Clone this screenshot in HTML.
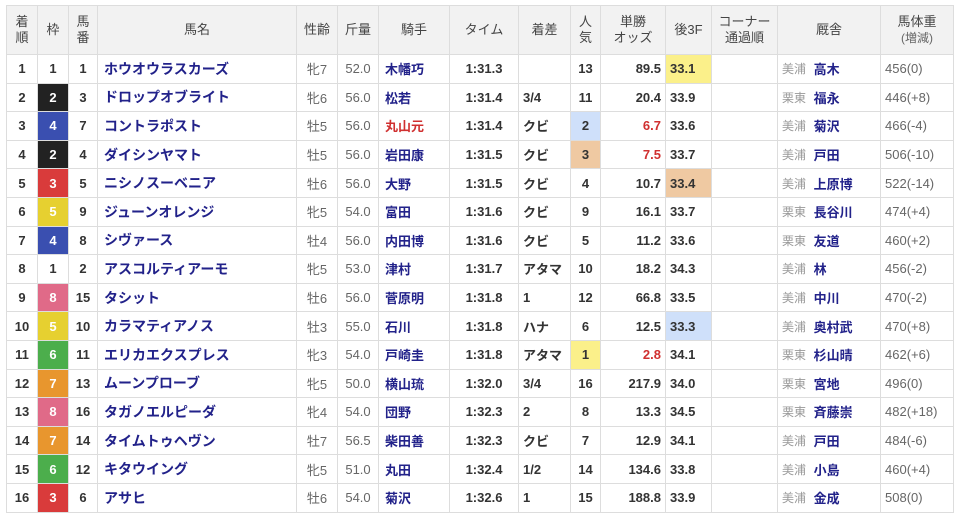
<!DOCTYPE html>
<html><head><meta charset="utf-8"><style>
body{margin:0;background:#fff;font-family:"Liberation Sans","Noto Sans CJK JP",sans-serif;}
table{position:absolute;left:6px;top:5px;border-collapse:collapse;table-layout:fixed;width:947px;font-size:13px;color:#444;}
td,th{border:1px solid #ddd;padding:0 4px;white-space:nowrap;overflow:hidden;vertical-align:middle;}
th{background:#f2f2f2;height:48px;font-weight:normal;font-size:13px;line-height:16px;text-align:center;color:#444;}
td{height:27.6px;}
.c{text-align:center}.r{text-align:right}
.b{font-weight:bold;color:#333}
.nm{font-weight:600;color:#22228a;font-size:14px;padding-left:6px}
.jk{font-weight:bold;color:#22228a;padding-left:6px}
.red{color:#d03030 !important}
.g{color:#666}
.sm{color:#999;font-size:12px;vertical-align:middle}
.st .jk{vertical-align:middle;padding-left:4px}
.w1{background:#fff;color:#333}.w2{background:#222;color:#fff}.w3{background:#d93b3b;color:#fff}.w4{background:#3a4fb0;color:#fff}.w5{background:#e6d030;color:#fff}.w6{background:#4cae4c;color:#fff}.w7{background:#e8962e;color:#fff}.w8{background:#e06a88;color:#fff}
.hy{background:#fbf08a}.hb{background:#cfe0fa}.ht{background:#efc9a2}
.ttl{color:#666;font-size:12px}
</style></head><body>
<table>
<colgroup><col style="width:31px"><col style="width:31px"><col style="width:29px"><col style="width:199px"><col style="width:41px"><col style="width:41px"><col style="width:71px"><col style="width:69px"><col style="width:52px"><col style="width:30px"><col style="width:65px"><col style="width:46px"><col style="width:66px"><col style="width:103px"><col style="width:73px"></colgroup>
<tr><th>着<br>順</th><th>枠</th><th>馬<br>番</th><th>馬名</th><th>性齢</th><th>斤量</th><th>騎手</th><th>タイム</th><th>着差</th><th>人<br>気</th><th>単勝<br>オッズ</th><th>後3F</th><th>コーナー<br>通過順</th><th>厩舎</th><th>馬体重<br><span class="ttl">(増減)</span></th></tr>
<tr><td class="c b">1</td><td class="c b w1">1</td><td class="c b">1</td><td class="nm">ホウオウラスカーズ</td><td class="c g">牝7</td><td class="c g">52.0</td><td class="jk">木幡巧</td><td class="c b">1:31.3</td><td class="b"></td><td class="c b">13</td><td class="r b">89.5</td><td class="b hy">33.1</td><td></td><td class="st"><span class="sm">美浦</span> <span class="jk">高木</span></td><td class="g">456(0)</td></tr>
<tr><td class="c b">2</td><td class="c b w2">2</td><td class="c b">3</td><td class="nm">ドロップオブライト</td><td class="c g">牝6</td><td class="c g">56.0</td><td class="jk">松若</td><td class="c b">1:31.4</td><td class="b">3/4</td><td class="c b">11</td><td class="r b">20.4</td><td class="b">33.9</td><td></td><td class="st"><span class="sm">栗東</span> <span class="jk">福永</span></td><td class="g">446(+8)</td></tr>
<tr><td class="c b">3</td><td class="c b w4">4</td><td class="c b">7</td><td class="nm">コントラポスト</td><td class="c g">牡5</td><td class="c g">56.0</td><td class="jk red">丸山元</td><td class="c b">1:31.4</td><td class="b">クビ</td><td class="c b hb">2</td><td class="r b red">6.7</td><td class="b">33.6</td><td></td><td class="st"><span class="sm">美浦</span> <span class="jk">菊沢</span></td><td class="g">466(-4)</td></tr>
<tr><td class="c b">4</td><td class="c b w2">2</td><td class="c b">4</td><td class="nm">ダイシンヤマト</td><td class="c g">牡5</td><td class="c g">56.0</td><td class="jk">岩田康</td><td class="c b">1:31.5</td><td class="b">クビ</td><td class="c b ht">3</td><td class="r b red">7.5</td><td class="b">33.7</td><td></td><td class="st"><span class="sm">美浦</span> <span class="jk">戸田</span></td><td class="g">506(-10)</td></tr>
<tr><td class="c b">5</td><td class="c b w3">3</td><td class="c b">5</td><td class="nm">ニシノスーベニア</td><td class="c g">牡6</td><td class="c g">56.0</td><td class="jk">大野</td><td class="c b">1:31.5</td><td class="b">クビ</td><td class="c b">4</td><td class="r b">10.7</td><td class="b ht">33.4</td><td></td><td class="st"><span class="sm">美浦</span> <span class="jk">上原博</span></td><td class="g">522(-14)</td></tr>
<tr><td class="c b">6</td><td class="c b w5">5</td><td class="c b">9</td><td class="nm">ジューンオレンジ</td><td class="c g">牝5</td><td class="c g">54.0</td><td class="jk">富田</td><td class="c b">1:31.6</td><td class="b">クビ</td><td class="c b">9</td><td class="r b">16.1</td><td class="b">33.7</td><td></td><td class="st"><span class="sm">栗東</span> <span class="jk">長谷川</span></td><td class="g">474(+4)</td></tr>
<tr><td class="c b">7</td><td class="c b w4">4</td><td class="c b">8</td><td class="nm">シヴァース</td><td class="c g">牡4</td><td class="c g">56.0</td><td class="jk">内田博</td><td class="c b">1:31.6</td><td class="b">クビ</td><td class="c b">5</td><td class="r b">11.2</td><td class="b">33.6</td><td></td><td class="st"><span class="sm">栗東</span> <span class="jk">友道</span></td><td class="g">460(+2)</td></tr>
<tr><td class="c b">8</td><td class="c b w1">1</td><td class="c b">2</td><td class="nm">アスコルティアーモ</td><td class="c g">牝5</td><td class="c g">53.0</td><td class="jk">津村</td><td class="c b">1:31.7</td><td class="b">アタマ</td><td class="c b">10</td><td class="r b">18.2</td><td class="b">34.3</td><td></td><td class="st"><span class="sm">美浦</span> <span class="jk">林</span></td><td class="g">456(-2)</td></tr>
<tr><td class="c b">9</td><td class="c b w8">8</td><td class="c b">15</td><td class="nm">タシット</td><td class="c g">牡6</td><td class="c g">56.0</td><td class="jk">菅原明</td><td class="c b">1:31.8</td><td class="b">1</td><td class="c b">12</td><td class="r b">66.8</td><td class="b">33.5</td><td></td><td class="st"><span class="sm">美浦</span> <span class="jk">中川</span></td><td class="g">470(-2)</td></tr>
<tr><td class="c b">10</td><td class="c b w5">5</td><td class="c b">10</td><td class="nm">カラマティアノス</td><td class="c g">牡3</td><td class="c g">55.0</td><td class="jk">石川</td><td class="c b">1:31.8</td><td class="b">ハナ</td><td class="c b">6</td><td class="r b">12.5</td><td class="b hb">33.3</td><td></td><td class="st"><span class="sm">美浦</span> <span class="jk">奥村武</span></td><td class="g">470(+8)</td></tr>
<tr><td class="c b">11</td><td class="c b w6">6</td><td class="c b">11</td><td class="nm">エリカエクスプレス</td><td class="c g">牝3</td><td class="c g">54.0</td><td class="jk">戸崎圭</td><td class="c b">1:31.8</td><td class="b">アタマ</td><td class="c b hy">1</td><td class="r b red">2.8</td><td class="b">34.1</td><td></td><td class="st"><span class="sm">栗東</span> <span class="jk">杉山晴</span></td><td class="g">462(+6)</td></tr>
<tr><td class="c b">12</td><td class="c b w7">7</td><td class="c b">13</td><td class="nm">ムーンプローブ</td><td class="c g">牝5</td><td class="c g">50.0</td><td class="jk">横山琉</td><td class="c b">1:32.0</td><td class="b">3/4</td><td class="c b">16</td><td class="r b">217.9</td><td class="b">34.0</td><td></td><td class="st"><span class="sm">栗東</span> <span class="jk">宮地</span></td><td class="g">496(0)</td></tr>
<tr><td class="c b">13</td><td class="c b w8">8</td><td class="c b">16</td><td class="nm">タガノエルピーダ</td><td class="c g">牝4</td><td class="c g">54.0</td><td class="jk">団野</td><td class="c b">1:32.3</td><td class="b">2</td><td class="c b">8</td><td class="r b">13.3</td><td class="b">34.5</td><td></td><td class="st"><span class="sm">栗東</span> <span class="jk">斉藤崇</span></td><td class="g">482(+18)</td></tr>
<tr><td class="c b">14</td><td class="c b w7">7</td><td class="c b">14</td><td class="nm">タイムトゥヘヴン</td><td class="c g">牡7</td><td class="c g">56.5</td><td class="jk">柴田善</td><td class="c b">1:32.3</td><td class="b">クビ</td><td class="c b">7</td><td class="r b">12.9</td><td class="b">34.1</td><td></td><td class="st"><span class="sm">美浦</span> <span class="jk">戸田</span></td><td class="g">484(-6)</td></tr>
<tr><td class="c b">15</td><td class="c b w6">6</td><td class="c b">12</td><td class="nm">キタウイング</td><td class="c g">牝5</td><td class="c g">51.0</td><td class="jk">丸田</td><td class="c b">1:32.4</td><td class="b">1/2</td><td class="c b">14</td><td class="r b">134.6</td><td class="b">33.8</td><td></td><td class="st"><span class="sm">美浦</span> <span class="jk">小島</span></td><td class="g">460(+4)</td></tr>
<tr><td class="c b">16</td><td class="c b w3">3</td><td class="c b">6</td><td class="nm">アサヒ</td><td class="c g">牡6</td><td class="c g">54.0</td><td class="jk">菊沢</td><td class="c b">1:32.6</td><td class="b">1</td><td class="c b">15</td><td class="r b">188.8</td><td class="b">33.9</td><td></td><td class="st"><span class="sm">美浦</span> <span class="jk">金成</span></td><td class="g">508(0)</td></tr>
</table>
</body></html>
